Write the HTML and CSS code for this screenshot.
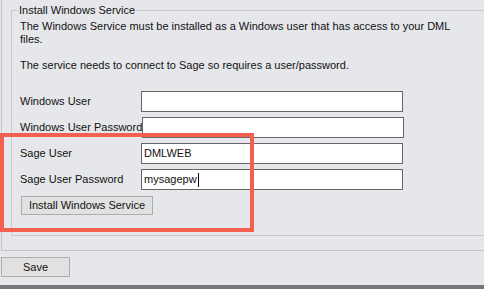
FILE: index.html
```html
<!DOCTYPE html>
<html>
<head>
<meta charset="utf-8">
<link rel="stylesheet" href="styles.css">
</head>
<body>
<div class="screen">
  <div class="panel">
    <div class="group">
      <div class="group-title">Install Windows Service</div>
      <p class="intro">The Windows Service must be installed as a Windows user that has access to your DML files.</p>
      <p class="intro intro-2">The service needs to connect to Sage so requires a user/password.</p>
      <div class="form">
        <div class="row"><span class="label">Windows User</span><div class="textbox"></div></div>
        <div class="row"><span class="label">Windows User Password</span><div class="textbox"></div></div>
        <div class="row"><span class="label">Sage User</span><div class="textbox">DMLWEB</div></div>
        <div class="row"><span class="label">Sage User Password</span><div class="textbox">mysagepw<span class="caret"></span></div></div>
        <button class="btn btn-install">Install Windows Service</button>
      </div>
    </div>
  </div>
  <button class="btn btn-save">Save</button>
  <div class="taskbar"></div>
  <div class="highlight"></div>
</div>
</body>
</html>
```
FILE: styles.css
```css
html, body {
  margin: 0;
  padding: 0;
  background: #e6e7eb;
  overflow: hidden;
}
.screen {
  position: relative;
  width: 484px;
  height: 289px;
  display: flex;
  flex-direction: column;
  font-family: "Liberation Sans", Arial, sans-serif;
  font-size: 11px;
  line-height: 13px;
  color: #111;
  overflow: hidden;
}
.panel {
  margin-left: 1px;
  border-left: 1px solid #c4c5c9;
  border-bottom: 1px solid #c4c5c9;
  padding: 10px 0 14px 9px;
  width: 520px;
}
.group {
  border: 1px solid #c9cacd;
  border-right: none;
  padding: 0 0 20px 8px;
}
.group-title {
  display: block;
  width: max-content;
  margin: -7px 0 0 -2px;
  padding: 0 1px;
  background: #e6e7eb;
  line-height: 13px;
}
.intro {
  margin: 3px 0 0 0;
  width: 440px;
}
.intro-2 {
  margin-top: 13px;
}
.form {
  margin-top: 19px;
  display: flex;
  flex-direction: column;
  align-items: flex-start;
  gap: 5px;
}
.row {
  display: flex;
  align-items: center;
}
.label {
  flex: 0 0 121px;
  white-space: nowrap;
}
.textbox {
  flex: 0 0 auto;
  box-sizing: border-box;
  width: 262px;
  height: 21px;
  background: #fff;
  border: 1px solid #666;
  padding: 3px 2px;
  line-height: 13px;
  display: flex;
  align-items: center;
}
.caret {
  display: inline-block;
  width: 1px;
  height: 14px;
  background: #000;
  margin-left: 1px;
}
.btn {
  box-sizing: border-box;
  font-family: inherit;
  font-size: 11px;
  line-height: 13px;
  color: #111;
  background: #e1e1e1;
  border: 1px solid #adadad;
  padding: 0;
  border-radius: 0;
}
.btn-install {
  margin: 1px 0 0 1px;
  width: 132px;
  height: 19px;
}
.btn-save {
  margin: 6px 0 0 1px;
  width: 69px;
  height: 20px;
}
.taskbar {
  margin-top: auto;
  height: 4px;
  background: #777;
}
.highlight {
  position: absolute;
  left: 0;
  top: 133px;
  width: 254px;
  height: 99px;
  box-sizing: border-box;
  border: 4px solid #f4604f;
}
```
